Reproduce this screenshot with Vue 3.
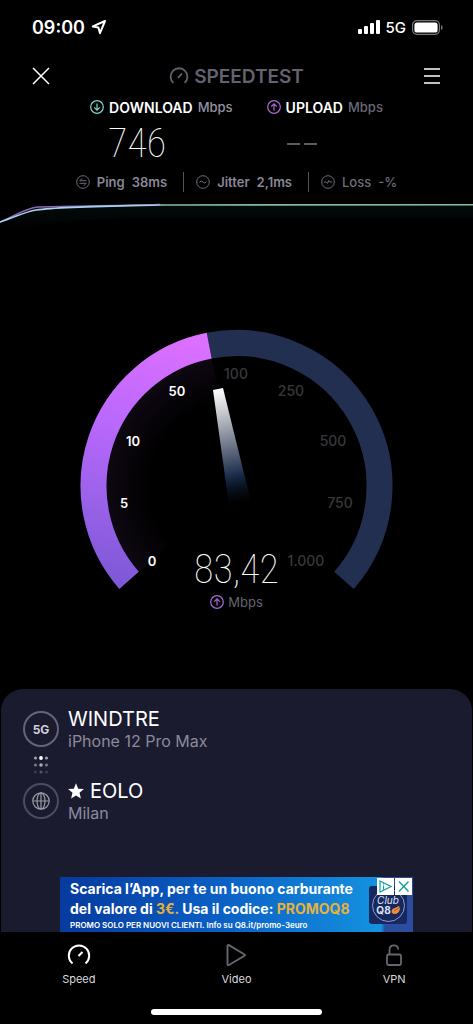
<script setup>
const ticks = [
  { label: '0', x: 152, y: 566, reached: true },
  { label: '5', x: 124, y: 508, reached: true },
  { label: '10', x: 133, y: 446, reached: true },
  { label: '50', x: 177, y: 396, reached: true },
  { label: '100', x: 236, y: 379, reached: false },
  { label: '250', x: 291, y: 396, reached: false },
  { label: '500', x: 333, y: 446, reached: false },
  { label: '750', x: 340, y: 508, reached: false },
  { label: '1.000', x: 306, y: 566, reached: false },
]

const cx = 236.5
const cy = 486
const radius = 143

// Degrees are measured clockwise from the top of the dial.
function point(deg) {
  const a = (deg * Math.PI) / 180
  return `${(cx + radius * Math.sin(a)).toFixed(2)} ${(cy - radius * Math.cos(a)).toFixed(2)}`
}
function arc(from, to) {
  const large = to - from > 180 ? 1 : 0
  return `M${point(from)}A${radius} ${radius} 0 ${large} 1 ${point(to)}`
}
const track = arc(-11, 131.3)
const progress = arc(-131.3, -11)
</script>

<template>
  <div class="screen">
    <div class="status">
      <div class="clock">
        <span>09:00</span>
        <svg width="16" height="16" viewBox="0 0 16 16" aria-hidden="true">
          <path d="M14 2 1.8 7.4 7.4 8.6 9 14.2Z" fill="none" stroke="#fff" stroke-width="2" stroke-linejoin="round" />
        </svg>
      </div>
      <div class="signal">
        <svg width="22" height="15" viewBox="0 0 22 15" aria-hidden="true">
          <g fill="#fff">
            <rect x="0" y="9" width="4" height="5" rx="1" />
            <rect x="6" y="6" width="4" height="8" rx="1" />
            <rect x="12" y="3" width="4" height="11" rx="1" />
            <rect x="18" y="0" width="4" height="14" rx="1" />
          </g>
        </svg>
        <span>5G</span>
        <svg width="31" height="15" viewBox="0 0 31 15" aria-hidden="true">
          <rect x="0.6" y="0.6" width="26.8" height="13.8" rx="4.2" fill="none" stroke="#77777b" stroke-width="1.2" />
          <rect x="2.4" y="2.4" width="23.2" height="10.2" rx="2.6" fill="#fff" />
          <path d="M29 5v5q1.6-.5 1.6-2.5T29 5Z" fill="#77777b" />
        </svg>
      </div>
    </div>

    <header class="top">
      <button class="icon-button" aria-label="Close">
        <svg width="18" height="18" viewBox="0 0 18 18"><path d="M1 1 17 17M17 1 1 17" stroke="#fff" stroke-width="1.5" /></svg>
      </button>
      <div class="brand">
        <svg width="20" height="18" viewBox="0 0 20 18" aria-hidden="true">
          <path d="M4.4 15.9A8.4 8.4 0 1 1 15.6 15.9M9 10.8 13 6.5" fill="none" stroke="#65616f" stroke-width="1.8" />
        </svg>
        <span>SPEEDTEST</span>
      </div>
      <button class="icon-button" aria-label="Menu">
        <svg width="18" height="18" viewBox="0 0 18 18"><path d="M1 2H17M1 9H17M1 16H17" stroke="#fff" stroke-width="1.7" /></svg>
      </button>
    </header>

    <section class="totals">
      <div class="total">
        <div class="total-name">
          <svg width="14" height="14" viewBox="0 0 14 14" aria-hidden="true">
            <g fill="none" stroke="#7fd6c8" stroke-width="1.2"><circle cx="7" cy="7" r="6.3" /><path d="M7 3.5V10M4.2 7.3 7 10.1 9.8 7.3" /></g>
          </svg>
          <b>DOWNLOAD</b><span>Mbps</span>
        </div>
        <div class="digits">746</div>
      </div>
      <div class="total">
        <div class="total-name upload">
          <svg width="14" height="14" viewBox="0 0 14 14" aria-hidden="true">
            <g fill="none" stroke="#a76bd6" stroke-width="1.2"><circle cx="7" cy="7" r="6.3" /><path d="M7 10.5V4M4.2 6.7 7 3.9 9.8 6.7" /></g>
          </svg>
          <b>UPLOAD</b><span>Mbps</span>
        </div>
        <div class="pending" aria-label="No result yet"><i></i><i></i></div>
      </div>
    </section>

    <section class="quality">
      <div class="quality-item">
        <svg width="14" height="14" viewBox="0 0 14 14" aria-hidden="true">
          <g fill="none" stroke="#6d6a78"><circle cx="7" cy="7" r="6.3" /><path d="M10.5 5.7H3.8L6.2 3.3M3.5 8.3H10.2L7.8 10.7" /></g>
        </svg>
        <b>Ping</b><b>38ms</b>
      </div>
      <div class="quality-item">
        <svg width="14" height="14" viewBox="0 0 14 14" aria-hidden="true">
          <g fill="none" stroke="#6d6a78"><circle cx="7" cy="7" r="6.3" /><path d="M3.5 7.5Q5 4.5 7 7T10.5 6.5" /></g>
        </svg>
        <b>Jitter</b><b>2,1ms</b>
      </div>
      <div class="quality-item loss">
        <svg width="14" height="14" viewBox="0 0 14 14" aria-hidden="true">
          <g fill="none" stroke="#6d6a78"><circle cx="7" cy="7" r="6.3" /><path d="M2.8 7H5L6.2 8.3M11.2 7H9L7.6 5.3M6.5 8.5 7.7 5.5" /></g>
        </svg>
        <span>Loss</span><span>-%</span>
      </div>
    </section>

    <svg class="history" viewBox="0 0 473 48" preserveAspectRatio="none" aria-hidden="true">
      <defs>
        <linearGradient id="down" x1="0" x2="1" y1="0" y2="0">
          <stop offset="0" stop-color="#a9d3ee" /><stop offset="0.33" stop-color="#a8cdea" /><stop offset="0.35" stop-color="#7fb8a6" /><stop offset="1" stop-color="#86bba9" />
        </linearGradient>
        <linearGradient id="glow" x1="0" x2="0" y1="0" y2="1">
          <stop offset="0" stop-color="#0a2b2b" stop-opacity="0.25" /><stop offset="1" stop-color="#0a2b2b" stop-opacity="0" />
        </linearGradient>
      </defs>
      <path d="M0 30C16 25 24 20 36 18C60 14 110 13 160 13L473 12.5V26H160C80 26 40 32 0 40Z" fill="url(#glow)" />
      <path d="M0 30C14 24 26 16 38 15C60 14 110 14 160 12.5" fill="none" stroke="#8a68b4" stroke-width="1.4" />
      <path d="M0 30C16 25 24 20 36 18C60 14.5 110 14 160 13L473 12.7" fill="none" stroke="url(#down)" stroke-width="1.6" />
    </svg>

    <section class="gauge">
      <svg class="dial" width="321" height="264" viewBox="76 326 321 264" role="img" aria-label="Upload speed dial">
        <defs>
          <linearGradient id="arcFill" gradientUnits="userSpaceOnUse" x1="200" y1="335" x2="130" y2="588">
            <stop offset="0" stop-color="#df70ff" /><stop offset="0.4" stop-color="#bb68fd" /><stop offset="0.7" stop-color="#9c62ea" /><stop offset="1" stop-color="#7d58d6" />
          </linearGradient>
          <linearGradient id="needle" gradientUnits="userSpaceOnUse" x1="218" y1="389" x2="240" y2="504">
            <stop offset="0" stop-color="#fff" /><stop offset="0.2" stop-color="#c8cad0" /><stop offset="0.5" stop-color="#6c7587" /><stop offset="0.75" stop-color="#1b2c4b" /><stop offset="1" stop-color="#061021" stop-opacity="0" />
          </linearGradient>
          <radialGradient id="halo" gradientUnits="userSpaceOnUse" cx="236.5" cy="486" r="131">
            <stop offset="0.65" stop-color="#b060e0" stop-opacity="0" /><stop offset="1" stop-color="#b060e0" stop-opacity="0.08" />
          </radialGradient>
        </defs>
        <path d="M236.5 486 138.5 572.5A131 131 0 0 1 211.5 357.5Z" fill="url(#halo)" />
        <path :d="track" fill="none" stroke="#222f50" stroke-width="26" />
        <path :d="progress" fill="none" stroke="url(#arcFill)" stroke-width="26" />
        <path d="M213 390 223 388 251 502 229 505Z" fill="url(#needle)" />
        <text v-for="t in ticks" :key="t.label" :x="t.x" :y="t.y" text-anchor="middle" class="tick" :class="{ reached: t.reached }">{{ t.label }}</text>
      </svg>
      <div class="reading">
        <div class="digits">83,42</div>
        <div class="unit">
          <svg width="14" height="14" viewBox="0 0 14 14" aria-hidden="true">
            <g fill="none" stroke="#a76bd6" stroke-width="1.2"><circle cx="7" cy="7" r="6.3" /><path d="M7 10.5V4M4.2 6.7 7 3.9 9.8 6.7" /></g>
          </svg>
          <span>Mbps</span>
        </div>
      </div>
    </section>

    <section class="panel">
      <div class="route">
        <div class="badge">5G</div>
        <div class="place">
          <div class="place-name">WINDTRE</div>
          <div class="place-note">iPhone 12 Pro Max</div>
        </div>
        <svg class="dots" width="16" height="18" viewBox="0 0 16 18" aria-hidden="true">
          <g fill="#a09fab"><circle cx="2.5" cy="2" r="1.6" /><circle cx="8" cy="2" r="1.9" fill="#fff" /><circle cx="13.5" cy="2" r="1.6" /></g>
          <g fill="#777684"><circle cx="2.5" cy="9" r="1.6" /><circle cx="8" cy="9" r="1.8" fill="#aaa9b4" /><circle cx="13.5" cy="9" r="1.6" /></g>
          <g fill="#3c3b4d"><circle cx="2.5" cy="16" r="1.6" /><circle cx="8" cy="16" r="1.6" fill="#555464" /><circle cx="13.5" cy="16" r="1.6" /></g>
        </svg>
        <div class="badge server">
          <svg width="18" height="18" viewBox="0 0 18 18" aria-hidden="true">
            <g fill="none" stroke="#9b9aa6" stroke-width="1.2"><circle cx="9" cy="9" r="8.2" /><ellipse cx="9" cy="9" rx="4" ry="8.2" /><path d="M1 9H17M9 1V17" /></g>
          </svg>
        </div>
        <div class="place">
          <div class="place-name">
            <svg width="16" height="16" viewBox="0 0 16 16" aria-hidden="true"><path d="M8 .3 10.2 5.7 15.9 6.1 11.5 9.8 12.9 15.5 8 12.4 3.1 15.5 4.5 9.8 .1 6.1 5.8 5.7Z" fill="#fff" /></svg>
            <span>EOLO</span>
          </div>
          <div class="place-note">Milan</div>
        </div>
      </div>

      <aside class="ad">
        <a class="ad-copy" href="#">
          <span class="ad-line">Scarica l’App, per te un buono carburante</span>
          <span class="ad-line">del valore di <em>3€.</em> Usa il codice: <em>PROMOQ8</em></span>
          <span class="ad-small">PROMO SOLO PER NUOVI CLIENTI. Info su Q8.it/promo-3euro</span>
        </a>
        <div class="club">
          <div class="club-ring">
            <i>Club</i>
            <div class="club-name"><b>Q8</b><svg width="9" height="8" viewBox="0 0 9 8" aria-hidden="true"><path d="M1 7Q-.5 3 4 2L8 0 9 3Q8 8 3 8Z" fill="#e99043" /><path d="M3 5 8 2" stroke="#b64e38" /></svg></div>
          </div>
        </div>
        <div class="ad-tools">
          <button aria-label="Ad choices"><svg width="13" height="13" viewBox="0 0 13 13"><path d="M1 1 12 6.5 1 12ZM4.5 5.5V9.5M4.5 3.5V4.5" fill="none" stroke="#17a0a0" stroke-width="1.2" /></svg></button>
          <button aria-label="Close ad"><svg width="13" height="13" viewBox="0 0 13 13"><path d="M2 1.5 11.5 11.5M11.5 1.5 2 11.5" stroke="#17a0a0" stroke-width="1.4" /></svg></button>
        </div>
      </aside>
    </section>

    <nav class="tabs">
      <a class="tab" href="#" aria-current="page">
        <svg width="24" height="24" viewBox="0 0 24 24" aria-hidden="true"><path d="M5.5 20.5A10.2 10.2 0 1 1 18.5 20.5M11.5 13 15.5 9" fill="none" stroke="#fff" stroke-width="2" /></svg>
        <span>Speed</span>
      </a>
      <a class="tab" href="#">
        <svg width="24" height="24" viewBox="0 0 24 24" aria-hidden="true"><path d="M3.5 3Q3.5 1.5 5 2.2L20.5 11.5Q21.5 12 20.5 12.8L5 22Q3.5 22.5 3.5 21Z" fill="none" stroke="#686571" stroke-width="1.9" /></svg>
        <span>Video</span>
      </a>
      <a class="tab" href="#">
        <svg width="24" height="24" viewBox="0 0 24 24" aria-hidden="true"><rect x="5" y="11.5" width="14" height="10.5" rx="1.8" fill="none" stroke="#686571" stroke-width="1.8" /><path d="M7.5 11.5V7Q7.5 2.3 12 2.3 16 2.3 16.3 6.5" fill="none" stroke="#686571" stroke-width="1.8" /></svg>
        <span>VPN</span>
      </a>
      <div class="home"></div>
    </nav>
  </div>
</template>

<style>
body {
  background: #000;
}
</style>

<style scoped>
.screen {
  display: flex;
  flex-direction: column;
  min-height: 100vh;
  background: #000;
  color: #fff;
  font-family: Inter, "Open Sans", sans-serif;
}
.screen * {
  box-sizing: border-box;
}
svg {
  display: block;
  flex: none;
}
button {
  padding: 0;
  border: 0;
  background: none;
}
a {
  color: inherit;
  text-decoration: none;
}
.status {
  display: flex;
  align-items: center;
  justify-content: space-between;
  height: 54px;
  padding: 0 30px 0 32px;
}
.clock,
.signal {
  display: flex;
  align-items: center;
  gap: 6px;
}
.clock {
  font-size: 18px;
  font-weight: 600;
}
.signal {
  font-size: 15px;
  font-weight: 500;
}
.top {
  display: flex;
  align-items: center;
  justify-content: space-between;
  height: 44px;
  padding: 0 32px;
}
.brand {
  display: flex;
  align-items: center;
  gap: 5px;
  color: #65616f;
  font-size: 19px;
  font-weight: 600;
}
.totals {
  display: flex;
  justify-content: center;
  gap: 34px;
}
.total-name {
  display: flex;
  align-items: center;
  gap: 5px;
  height: 18px;
  color: #9491a2;
  font-size: 13px;
  font-weight: 500;
}
.total-name b {
  color: #fff;
  font-size: 14px;
  font-weight: 600;
}
.total-name.upload span {
  color: #6a6778;
}
.digits {
  font-family: "Roboto Condensed", Roboto, sans-serif;
  font-size: 40px;
  font-weight: 100;
  line-height: 56px;
}
.total .digits {
  padding-left: 18px;
}
.pending {
  display: flex;
  gap: 4px;
  padding: 27px 0 0 20px;
}
.pending i {
  width: 13px;
  height: 2px;
  background: #5b5962;
}
.quality {
  display: flex;
  justify-content: center;
  height: 20px;
  color: #8a8797;
  font-size: 13px;
}
.quality-item {
  display: flex;
  align-items: center;
  gap: 7px;
}
.quality-item + .quality-item {
  margin-left: 16px;
  padding-left: 12px;
  border-left: 1px solid #55525f;
}
.quality-item b {
  font-weight: 600;
}
.loss {
  color: #6d6a78;
  font-weight: 500;
}
.history {
  width: 100%;
  height: 48px;
}
.gauge {
  position: relative;
  display: flex;
  justify-content: center;
  padding: 86px 0 99px;
}
.tick {
  fill: #38383b;
  font-size: 14px;
  font-weight: 500;
}
.tick.reached {
  fill: #fff;
  font-size: 13px;
  font-weight: 600;
}
.reading {
  position: absolute;
  right: 0;
  bottom: 78px;
  left: 0;
  display: flex;
  flex-direction: column;
  align-items: center;
}
.reading .digits {
  line-height: 44px;
}
.unit {
  display: flex;
  align-items: center;
  gap: 4px;
  height: 18px;
  margin-top: 1px;
  color: #62656f;
  font-size: 13px;
}
.panel {
  display: flex;
  flex: 1;
  flex-direction: column;
  justify-content: space-between;
  gap: 24px;
  margin: 0 1px;
  border-radius: 22px 22px 0 0;
  background: #1b1b2f;
}
.route {
  display: grid;
  grid-template-columns: 36px 1fr;
  column-gap: 9px;
  padding: 20px 22px 0;
}
.badge {
  display: grid;
  place-items: center;
  width: 36px;
  height: 36px;
  margin-top: 2px;
  border: 2px solid #656477;
  border-radius: 50%;
  color: #d0d0d8;
  font-size: 12px;
  font-weight: 700;
}
.server {
  border-color: #4d4c5f;
}
.dots {
  grid-column: 1 / -1;
  margin: 5px 10px 7px;
}
.place-name {
  display: flex;
  align-items: center;
  gap: 6px;
  height: 20px;
  font-size: 20px;
  line-height: 20px;
}
.place-note {
  height: 22px;
  color: #8b8a9c;
  font-size: 16px;
  line-height: 24px;
}
.ad {
  position: relative;
  display: flex;
  justify-content: space-between;
  height: 55px;
  margin: 0 59px;
  padding-left: 10px;
  background: linear-gradient(90deg, #063a9e, #0b5fc4 45%, #1492e0 91%, #2b4da0 92%);
}
.ad-copy {
  display: flex;
  flex-direction: column;
  padding-top: 2px;
  white-space: nowrap;
}
.ad-line {
  font-size: 14px;
  font-weight: 700;
  line-height: 20px;
}
.ad-line em {
  color: #e8b13a;
  font-style: normal;
}
.ad-small {
  font-size: 8px;
  font-weight: 600;
  line-height: 12px;
}
.club {
  display: grid;
  place-items: center;
  width: 38px;
  height: 38px;
  margin: 9px 6px 0 0;
  border-radius: 3px;
  background: #16285e;
}
.club-ring {
  display: flex;
  flex-direction: column;
  align-items: center;
  justify-content: center;
  width: 33px;
  height: 33px;
  border: 1px solid #8f9ccc;
  border-radius: 50%;
  color: #dfe4f5;
  font-size: 10px;
  line-height: 10px;
}
.club-name {
  display: flex;
  align-items: center;
}
.ad-tools {
  position: absolute;
  top: 1px;
  right: 1px;
  display: flex;
  gap: 1px;
}
.ad-tools button {
  display: grid;
  place-items: center;
  width: 17px;
  height: 17px;
  background: #fff;
}
.tabs {
  position: relative;
  display: grid;
  grid-template-columns: repeat(3, 1fr);
  height: 92px;
  background: #000;
}
.tab {
  display: flex;
  flex-direction: column;
  align-items: center;
  gap: 5px;
  padding-top: 11px;
  color: #d8d8dc;
  font-size: 11px;
  line-height: 14px;
}
.home {
  position: absolute;
  right: 32%;
  bottom: 9px;
  left: 32%;
  height: 6px;
  border-radius: 3px;
  background: #fff;
}
</style>
